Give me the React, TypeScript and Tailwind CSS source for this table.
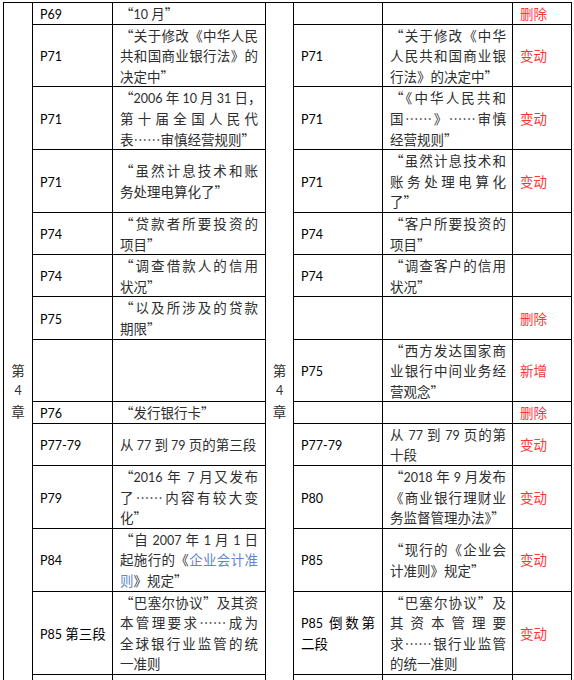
import React from 'react';

// Fonts: CJK text in Noto Sans CJK SC, latin runs (page numbers, years) in Lato
const CJK = "[font-family:'Noto_Sans_CJK_SC',sans-serif]";
const LATIN = "[font-family:Lato,'Noto_Sans_CJK_SC',sans-serif] text-[12.5px] leading-[0px]";

type Row = {
  lp: string[];
  lt: string[];
  rp: string[];
  rt: string[];
  st: string;
};

const rows: Row[] = [
  { lp: ['P69'], lt: ['“10 月”'], rp: [], rt: [], st: '删除' },
  {
    lp: ['P71'],
    lt: ['“关于修改《中华人民', '共和国商业银行法》的', '决定中”'],
    rp: ['P71'],
    rt: ['“关于修改《中华', '人民共和国商业银', '行法》的决定中”'],
    st: '变动',
  },
  {
    lp: ['P71'],
    lt: ['“2006 年 10 月 31 日，', '第十届全国人民代', '表……审慎经营规则”'],
    rp: ['P71'],
    rt: ['“《中华人民共和', '国……》……审慎', '经营规则”'],
    st: '变动',
  },
  {
    lp: ['P71'],
    lt: ['“虽然计息技术和账', '务处理电算化了”'],
    rp: ['P71'],
    rt: ['“虽然计息技术和', '账务处理电算化', '了”'],
    st: '变动',
  },
  {
    lp: ['P74'],
    lt: ['“贷款者所要投资的', '项目”'],
    rp: ['P74'],
    rt: ['“客户所要投资的', '项目”'],
    st: '',
  },
  {
    lp: ['P74'],
    lt: ['“调查借款人的信用', '状况”'],
    rp: ['P74'],
    rt: ['“调查客户的信用', '状况”'],
    st: '',
  },
  { lp: ['P75'], lt: ['“以及所涉及的贷款', '期限”'], rp: [], rt: [], st: '删除' },
  {
    lp: [],
    lt: [],
    rp: ['P75'],
    rt: ['“西方发达国家商', '业银行中间业务经', '营观念”'],
    st: '新增',
  },
  { lp: ['P76'], lt: ['“发行银行卡”'], rp: [], rt: [], st: '删除' },
  {
    lp: ['P77-79'],
    lt: ['从 77 到 79 页的第三段'],
    rp: ['P77-79'],
    rt: ['从 77 到 79 页的第', '十段'],
    st: '变动',
  },
  {
    lp: ['P79'],
    lt: ['“2016 年 7 月又发布', '了……内容有较大变', '化”'],
    rp: ['P80'],
    rt: ['“2018 年 9 月发布', '《商业银行理财业', '务监督管理办法》”'],
    st: '变动',
  },
  {
    lp: ['P84'],
    lt: ['“自 2007 年 1 月 1 日', '起施行的《{企业会计准}', '{则}》规定”'],
    rp: ['P85'],
    rt: ['“现行的《企业会', '计准则》规定”'],
    st: '变动',
  },
  {
    lp: ['P85 第三段'],
    lt: ['“巴塞尔协议”及其资', '本管理要求……成为', '全球银行业监管的统', '一准则'],
    rp: ['P85 倒数第', '二段'],
    rt: ['“巴塞尔协议”及', '其资本管理要', '求……银行业监管', '的统一准则'],
    st: '变动',
  },
];

// split a line into latin / cjk runs; {...} marks the blue (linked) text
function Runs({ text }: { text: string }) {
  const chunks = text.split(/(\{[^}]*\})/);
  return (
    <>
      {chunks.map((chunk, ci) => {
        if (!chunk) return null;
        const blue = chunk.startsWith('{');
        const body = blue ? chunk.slice(1, -1) : chunk;
        const parts = body.split(/([\x20-\x7e]+)/);
        return (
          <span key={ci} className={blue ? 'text-[#5f86cf]' : ''}>
            {parts.map((p, i) =>
              !p ? null : /[\x20-\x7e]/.test(p) ? (
                <span key={i} className={LATIN}>
                  {p}
                </span>
              ) : (
                <span key={i}>{p}</span>
              )
            )}
          </span>
        );
      })}
    </>
  );
}

function Lines({ lines }: { lines: string[] }) {
  return (
    <>
      {lines.map((line, i) => (
        <div
          key={i}
          className={
            i < lines.length - 1
              ? 'whitespace-nowrap text-justify [text-align-last:justify]'
              : 'whitespace-nowrap text-left'
          }
        >
          <Runs text={line} />
        </div>
      ))}
    </>
  );
}

const cell = 'border border-black align-middle p-0';

function Chapter() {
  return (
    <div className="text-center">
      <div>第</div>
      <div className="[font-family:Lato,sans-serif] text-[12.5px]">4</div>
      <div>章</div>
    </div>
  );
}

export default function App() {
  return (
    <div lang="zh-CN" className={`bg-white min-h-screen pl-[3px] pt-[2px] ${CJK}`}>
      <table className="table-fixed border-collapse w-[569px] text-[13.5px] leading-[20.6px] text-[#2e2e2e]">
        <colgroup>
          <col className="w-[29px]" />
          <col className="w-[80px]" />
          <col className="w-[153px]" />
          <col className="w-[28px]" />
          <col className="w-[89px]" />
          <col className="w-[130px]" />
          <col className="w-[59px]" />
        </colgroup>
        <tbody>
          {rows.map((r, i) => (
            <tr key={i}>
              {i === 0 && (
                <td rowSpan={rows.length + 1} className={cell}>
                  <Chapter />
                </td>
              )}
              <td className={`${cell} pl-[7px] pr-[3px] text-black`}>
                <Lines lines={r.lp} />
              </td>
              <td className={`${cell} pl-[7px] pr-[7px]`}>
                <Lines lines={r.lt} />
              </td>
              {i === 0 && (
                <td rowSpan={rows.length + 1} className={cell}>
                  <Chapter />
                </td>
              )}
              <td className={`${cell} pl-[7px] pr-[7px] text-black`}>
                <Lines lines={r.rp} />
              </td>
              <td className={`${cell} pl-[7px] pr-[6px]`}>
                <Lines lines={r.rt} />
              </td>
              <td className={`${cell} pl-[7px] pr-[6px] text-[#ff3535]`}>
                {r.st}
              </td>
            </tr>
          ))}
          {/* next rows of the table continue below the fold */}
          <tr className="h-[105px]">
            <td className={cell} />
            <td className={cell} />
            <td className={cell} />
            <td className={cell} />
            <td className={cell} />
          </tr>
        </tbody>
      </table>
    </div>
  );
}
